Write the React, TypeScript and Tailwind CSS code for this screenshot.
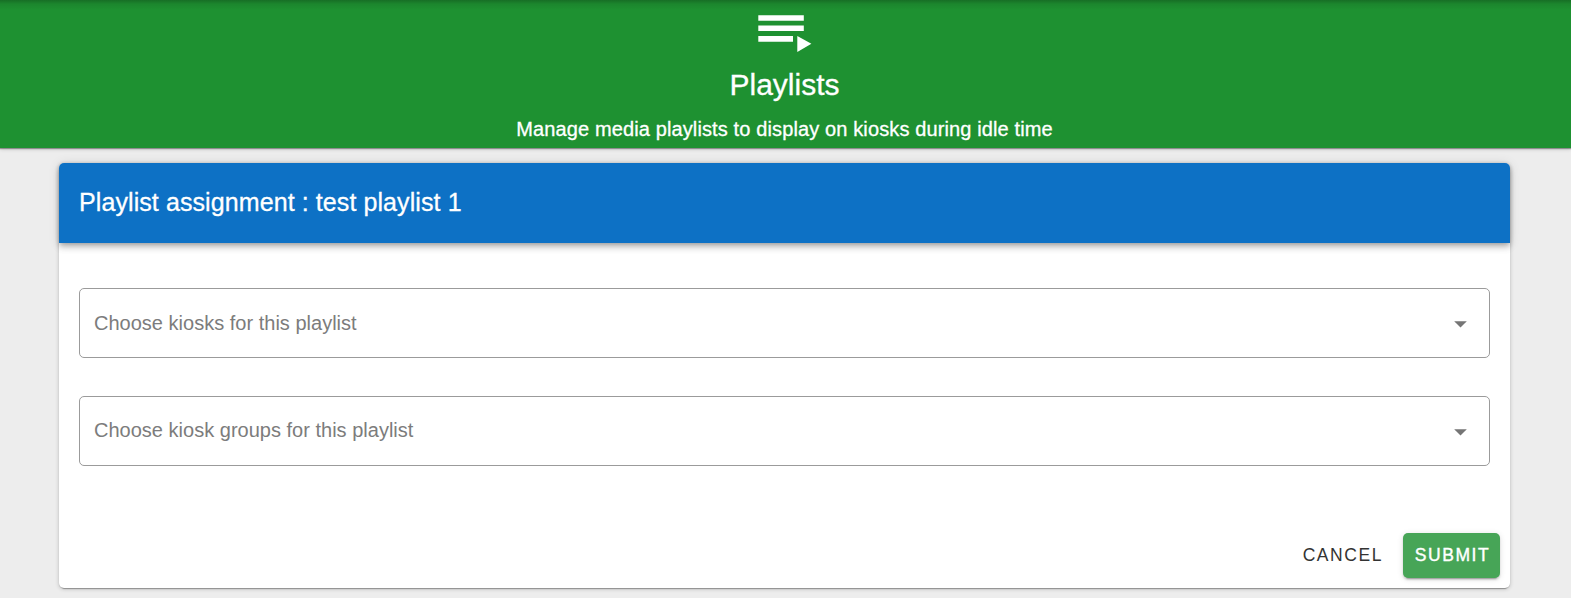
function PlaylistPlayIcon() {
  return (
    <svg className="h-[38px] w-[54px]" viewBox="0 0 54 38" fill="#fff" aria-hidden="true">
      <path d="M.3 .2H45.8V5.7H.3ZM.3 10.4H45.8V16H.3ZM.3 21H35V26.7H.3ZM39.3 21 53.4 28.8 39.3 37Z" />
    </svg>
  );
}

function SelectField({ label, labelClass = "" }: { label: string; labelClass?: string }) {
  return (
    <button
      type="button"
      className="flex h-[70px] w-full items-center justify-between rounded-[5px] border border-[#9b9b9b] bg-white pr-[22px] pl-[14px] text-left text-[20px] leading-6 text-[#7c7c7c]"
    >
      <span className={`tracking-[0.01px] ${labelClass}`}>{label}</span>
      <svg className="mt-0.5 h-[7px] w-[13px]" viewBox="0 0 13 7" fill="#757575" aria-hidden="true">
        <path d="M.2 .3H12.8L6.5 6.6Z" />
      </svg>
    </button>
  );
}

export default function App() {
  return (
    <div className="flex h-[598px] flex-col overflow-hidden bg-[#ededed] font-['Liberation_Sans',Arial,sans-serif]">
      <header className="flex h-[148px] shrink-0 flex-col items-center bg-[#1e9131] bg-[linear-gradient(to_bottom,rgba(0,0,0,0.24),rgba(0,0,0,0.08)_4px,transparent_10px)] pt-[15px] pr-[2px] text-white shadow-[0_1px_1px_rgba(0,0,0,0.32),0_1px_4px_rgba(0,0,0,0.2)]">
        <PlaylistPlayIcon />
        <h1 className="mt-[12px] text-[30px] leading-10 [-webkit-text-stroke:0.3px_white]">Playlists</h1>
        <p className="mt-[9px] text-[20px] leading-[30px] tracking-[0.125px] [-webkit-text-stroke:0.3px_white]">
          Manage media playlists to display on kiosks during idle time
        </p>
      </header>
      <main className="mt-[15px] mr-[61px] ml-[59px] flex h-[425px] shrink-0 flex-col rounded-[5px] bg-white shadow-[0_4px_1px_-3px_rgba(0,0,0,0.2),0_1px_1px_rgba(0,0,0,0.14),0_1px_4px_rgba(0,0,0,0.2)]">
        <div className="flex h-20 shrink-0 items-center rounded-t-[5px] bg-[#0d71c5] px-5 pb-[3px] text-white shadow-[0_2px_5px_-1px_rgba(0,0,0,0.25),0_5px_6px_rgba(0,0,0,0.14),0_1px_12px_rgba(0,0,0,0.12)]">
          <h2 className="text-[25px] leading-10 tracking-[0.09px] [-webkit-text-stroke:0.3px_white]">
            Playlist assignment : test playlist 1
          </h2>
        </div>
        <div className="flex flex-col gap-[38px] px-5 pt-[45px]">
          <SelectField label="Choose kiosks for this playlist" />
          <SelectField label="Choose kiosk groups for this playlist" labelClass="pb-[2px]" />
        </div>
        <div className="mt-auto flex justify-end gap-[10px] p-[10px] text-[17.5px] tracking-[1.56px]">
          <button type="button" className="h-[45px] px-[10px] text-[#333]">
            CANCEL
          </button>
          <button
            type="button"
            className="h-[45px] w-[97px] rounded-[5px] bg-[#47a557] pl-[2px] text-white shadow-[0_4px_1px_-3px_rgba(0,0,0,0.2),0_2px_2px_rgba(0,0,0,0.14),0_1px_6px_rgba(0,0,0,0.12)] [-webkit-text-stroke:0.4px_white]"
          >
            SUBMIT
          </button>
        </div>
      </main>
    </div>
  );
}
